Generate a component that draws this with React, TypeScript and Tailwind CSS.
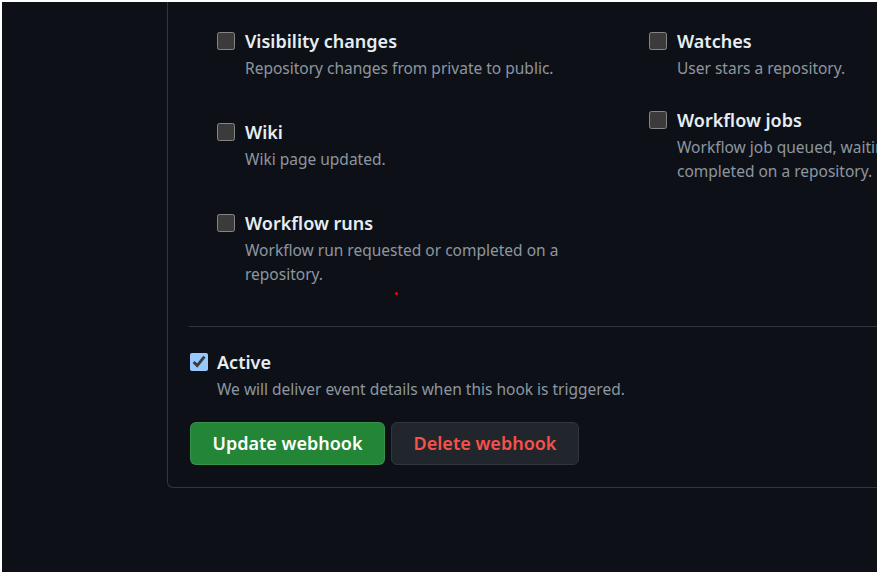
import React from 'react';

type HookEvent = {
  name: string;
  description: string;
};

const LEFT_EVENTS: HookEvent[] = [
  { name: 'Visibility changes', description: 'Repository changes from private to public.' },
  { name: 'Wiki', description: 'Wiki page updated.' },
  { name: 'Workflow runs', description: 'Workflow run requested or completed on a repository.' },
];

const RIGHT_EVENTS: HookEvent[] = [
  { name: 'Watches', description: 'User stars a repository.' },
  {
    name: 'Workflow jobs',
    description: 'Workflow job queued, waiting, in progress, or completed on a repository.',
  },
];

const EventItem: React.FC<{ event: HookEvent; checked?: boolean }> = ({ event, checked }) => (
  <label className="flex gap-[10px]">
    <input
      type="checkbox"
      defaultChecked={checked}
      className="m-0 mt-[4px] h-[18px] w-[18px] shrink-0 [color-scheme:dark]"
    />
    <div className="max-w-[360px]">
      <div className="text-[18px] font-semibold leading-[26px] text-[#e6edf3]">{event.name}</div>
      <p className="mt-[2px] text-[15.5px] leading-[24px] text-[#8d96a0]">{event.description}</p>
    </div>
  </label>
);

export default function App() {
  return (
    <div className="bg-white p-[2px]" style={{ fontFamily: '"Noto Sans", "Liberation Sans", sans-serif' }}>
      <div className="relative h-[570px] overflow-hidden bg-[#0d1117]">
        <div className="ml-[165px] mt-[-20px] rounded-bl-[6px] border-b border-l border-[#30363d] pb-[22px] pl-[21px]">
          <div className="grid grid-cols-[432px_432px] pl-[28px] pt-[46px]">
            <div className="flex flex-col gap-[39px]">
              {LEFT_EVENTS.map((e) => (
                <EventItem key={e.name} event={e} />
              ))}
            </div>
            <div className="flex flex-col gap-[27px]">
              {RIGHT_EVENTS.map((e) => (
                <EventItem key={e.name} event={e} />
              ))}
            </div>
          </div>

          <div className="mt-[40px] border-t border-[#30363d] pt-[22px]">
            <label className="flex gap-[9px] pl-[1px]">
              <input
                type="checkbox"
                defaultChecked
                className="m-0 mt-[4px] h-[18px] w-[18px] shrink-0 [color-scheme:dark]"
              />
              <div>
                <div className="text-[18px] font-semibold leading-[26px] text-[#e6edf3]">Active</div>
                <p className="mt-[2px] text-[15.5px] leading-[24px] text-[#8d96a0]">
                  We will deliver event details when this hook is triggered.
                </p>
              </div>
            </label>

            <div className="ml-[1px] mt-[21px] flex gap-[6px]">
              <button
                type="button"
                className="h-[43px] w-[195px] rounded-[6px] border border-[#f0f6fc1a] bg-[#238636] text-[18px] font-semibold text-white"
              >
                Update webhook
              </button>
              <button
                type="button"
                className="h-[43px] w-[188px] rounded-[6px] border border-[#30363d] bg-[#21262d] text-[18px] font-semibold text-[#f85149]"
              >
                Delete webhook
              </button>
            </div>
          </div>
        </div>

        <span className="absolute left-[393px] top-[290px] h-[3px] w-[3px] rounded-full bg-[#ff0000]" />
      </div>
    </div>
  );
}
